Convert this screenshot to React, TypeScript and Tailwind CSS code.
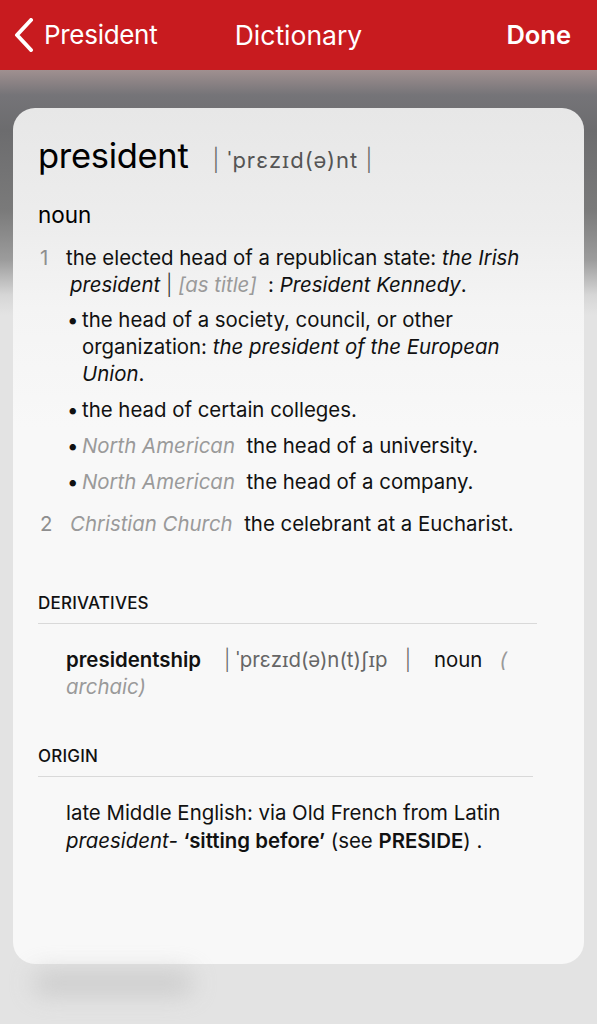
import React from "react";

const font = { fontFamily: "Inter, 'Noto Sans', sans-serif" };

export default function App() {
  return (
    <div className="w-[597px] h-[1024px] overflow-hidden bg-[#e3e3e3] flex flex-col" style={font}>
      {/* Header */}
      <div className="h-[70px] bg-[#c81b1f] flex items-center px-[14px] text-white shrink-0">
        <div className="flex items-center w-[200px]">
          <svg width="20" height="34" viewBox="0 0 20 34" className="mr-[10px]">
            <path d="M17 2 L3 17 L17 32" fill="none" stroke="white" strokeWidth="4" strokeLinecap="round" strokeLinejoin="round" />
          </svg>
          <span className="text-[26px] leading-none tracking-[-0.3px]">President</span>
        </div>
        <div className="flex-1 text-center text-[26.5px] leading-none">Dictionary</div>
        <div className="w-[200px] text-right text-[25.5px] font-semibold leading-none pr-[12px]">Done</div>
      </div>

      {/* Content area with blurred backdrop */}
      <div className="flex-1 flex flex-col bg-[linear-gradient(to_bottom,#a09090_0px,#757478_25px,#6c6c6e_60px,#7a7a7a_140px,#9c9c9c_190px,#d6d6d6_225px,#e3e3e3_245px)] px-[13px] pt-[38px]">
        <div className="rounded-[22px] h-[856px] bg-[linear-gradient(to_bottom,#e7e7e7_0px,#ededed_120px,#f4f4f4_200px,#f8f8f8_320px,#f8f8f8_100%)] pl-[25px] pr-[30px] pt-[28px] text-[#111]">
          {/* Headword */}
          <div className="flex items-baseline">
            <span className="text-[34.5px] leading-[40px] tracking-[-0.3px] text-black">president</span>
            <span className="ml-[24px] text-[22px] tracking-[1px] text-[#555]">
              <span className="font-light text-[#666]">|</span> ˈprɛzɪd(ə)nt <span className="font-light text-[#666]">|</span>
            </span>
          </div>

          <div className="mt-[24px] text-[22.5px] leading-[28px] text-black">noun</div>

          <div className="mt-[15px] text-[20.4px] leading-[27px] text-[#111]">
            {/* Sense 1 */}
            <div className="flex">
              <span className="w-[28px] shrink-0 pl-[2px] text-[#8e8e8e]">1</span>
              <div>
                the elected head of a republican state: <i>the Irish</i>
                <br />
                <span className="pl-[4px]">
                  <i>president</i> <span className="font-light text-[#333]">|</span> <i className="text-[#9a9a9a]">[as title]</i>
                  {"\u00a0 "}: <i>President Kennedy</i>.
                </span>
              </div>
            </div>

            <div className="pl-[29px] mt-[8px] flex flex-col gap-[9px]">
              <div className="flex">
                <span className="w-[15px] shrink-0">•</span>
                <div>
                  the head of a society, council, or other organization: <i>the president of the European Union</i>.
                </div>
              </div>
              <div className="flex">
                <span className="w-[15px] shrink-0">•</span>
                <div>the head of certain colleges.</div>
              </div>
              <div className="flex">
                <span className="w-[15px] shrink-0">•</span>
                <div>
                  <i className="text-[#9a9a9a]">North American</i>
                  {"\u00a0 "}the head of a university.
                </div>
              </div>
              <div className="flex">
                <span className="w-[15px] shrink-0">•</span>
                <div>
                  <i className="text-[#9a9a9a]">North American</i>
                  {"\u00a0 "}the head of a company.
                </div>
              </div>
            </div>

            {/* Sense 2 */}
            <div className="flex mt-[15px]">
              <span className="w-[32px] shrink-0 pl-[2px] text-[#8e8e8e]">2</span>
              <div>
                <i className="text-[#9a9a9a]">Christian Church</i>
                {"\u00a0 "}the celebrant at a Eucharist.
              </div>
            </div>
          </div>

          {/* Derivatives */}
          <div className="mt-[56px] text-[17px] font-medium tracking-[0.2px] text-[#111] leading-[20px]">DERIVATIVES</div>
          <div className="mt-[10px] h-px bg-[#d9d9d9] mr-[17px]" />
          <div className="pl-[28px] pt-[22px] text-[20.4px] leading-[27px] text-[#111] pr-[20px]">
            <span className="font-semibold">presidentship</span>
            <span className="text-[#666]">{"\u00a0\u00a0\u00a0 "}<span className="font-light">|</span> ˈprɛzɪd(ə)n(t)ʃɪp{"\u00a0\u00a0\u00a0"}<span className="font-light">|</span></span>
            {"\u00a0\u00a0\u00a0 "}noun{"\u00a0\u00a0 "}
            <i className="text-[#9a9a9a]">( archaic)</i>
          </div>

          {/* Origin */}
          <div className="mt-[46px] text-[17px] font-medium tracking-[0.2px] text-[#111] leading-[20px]">ORIGIN</div>
          <div className="mt-[10px] h-px bg-[#d9d9d9] mr-[21px]" />
          <div className="pl-[28px] pt-[22px] text-[20.4px] leading-[28px] text-[#111] pr-[20px]">
            late Middle English: via Old French from Latin <i>praesident-</i>{" "}
            <span className="font-semibold">‘sitting before’</span> (see <span className="font-semibold">PRESIDE</span>) .
          </div>
        </div>
        <div className="mt-[8px] ml-[20px] w-[160px] h-[22px] rounded-full bg-[#c4c4c4] blur-md opacity-80" />
      </div>
    </div>
  );
}
